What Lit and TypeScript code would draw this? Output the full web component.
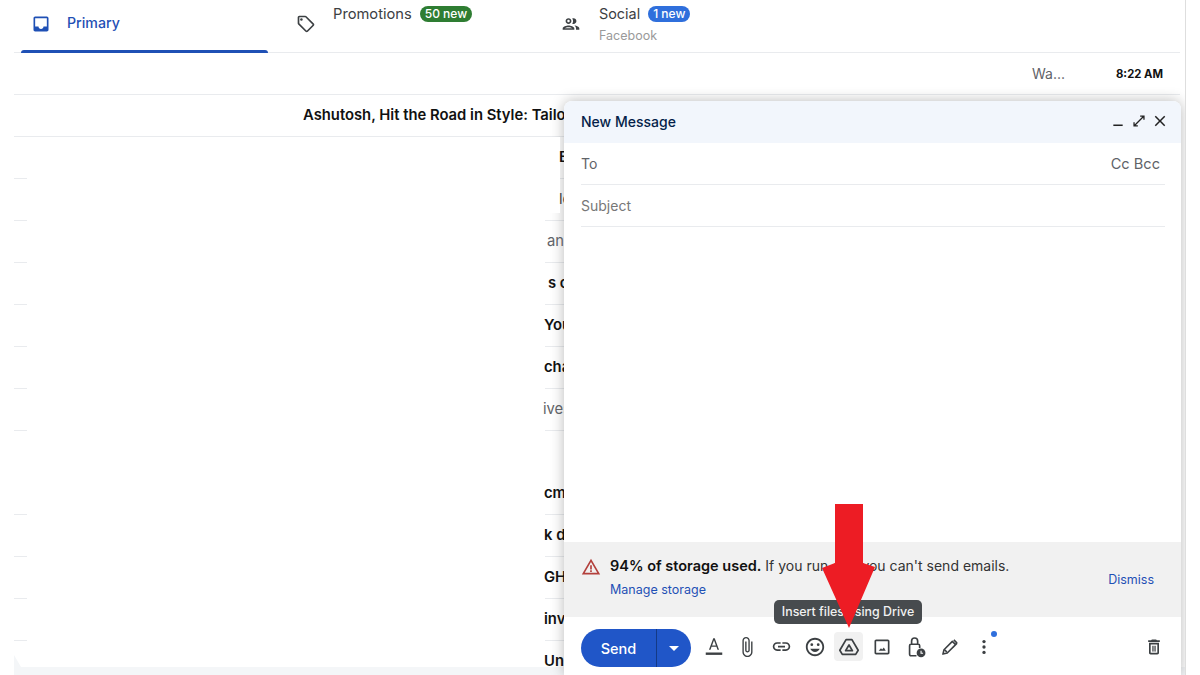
import { LitElement, css, html, svg } from 'lit';
import { customElement } from 'lit/decorators.js';

const icons: Record<string, unknown> = {
	inbox: svg`<path d="M19 3H4.99c-1.11 0-1.98.89-1.98 2L3 19c0 1.1.88 2 1.99 2H19c1.1 0 2-.9 2-2V5c0-1.11-.9-2-2-2zm0 12h-4c0 1.66-1.35 3-3 3s-3-1.34-3-3H4.99V5H19v10z"/>`,
	tag: svg`<path d="M21.41 11.41l-8.83-8.83C12.21 2.21 11.7 2 11.17 2H4C2.9 2 2 2.9 2 4v7.17c0 .53.21 1.04.59 1.41l8.83 8.83c.78.78 2.05.78 2.83 0l7.17-7.17c.78-.78.78-2.04-.01-2.83zM12.83 20L4 11.17V4h7.17L20 12.83 12.83 20z"/><circle cx="6.5" cy="6.5" r="1.5"/>`,
	people: svg`<path d="M9 13.75c-2.34 0-7 1.17-7 3.5V19h14v-1.75c0-2.33-4.66-3.5-7-3.5zM4.34 17c.84-.58 2.87-1.25 4.66-1.25s3.82.67 4.66 1.25H4.34zM9 12c1.93 0 3.5-1.57 3.5-3.5S10.93 5 9 5 5.5 6.57 5.5 8.5 7.07 12 9 12zm0-5c.83 0 1.5.67 1.5 1.5S9.83 10 9 10s-1.5-.67-1.5-1.5S8.17 7 9 7zm7.04 6.81c1.16.84 1.96 1.96 1.96 3.44V19h4v-1.75c0-2.02-3.5-3.17-5.96-3.44zM15 12c1.93 0 3.5-1.57 3.5-3.5S16.93 5 15 5c-.54 0-1.04.13-1.5.35.63.89 1 1.98 1 3.15s-.37 2.26-1 3.15c.46.22.96.35 1.5.35z"/>`,
	minimize: svg`<rect x="4" y="18" width="16" height="2.6"/>`,
	expand: svg`<path d="M14 3.5h6.5V10M20.5 3.5l-17 17M3.5 14v6.5H10" fill="none" stroke="currentColor" stroke-width="2.2"/>`,
	close: svg`<path d="M19 6.41L17.59 5 12 10.59 6.41 5 5 6.41 10.59 12 5 17.59 6.41 19 12 13.41 17.59 19 19 17.59 13.41 12z"/>`,
	warning: svg`<path d="M1 21h22L12 2 1 21zm3.47-2L12 5.99 19.53 19H4.47zM11 16h2v2h-2zm0-6h2v5h-2z"/>`,
	format: svg`<path d="M11.200 2.500 6.500 15h1.700l1.150-3.200h5.300l1.150 3.200h1.700L12.800 2.500h-1.600zm-1.300 7.800L12 4.600l2.100 5.700H9.900z"/><rect x="3" y="18" width="18" height="2.600"/>`,
	attach: svg`<path d="M16.5 6v11.5c0 2.21-1.79 4-4 4s-4-1.79-4-4V5c0-1.38 1.12-2.5 2.5-2.5s2.5 1.12 2.5 2.5v10.5c0 .55-.45 1-1 1s-1-.45-1-1V6H10v9.5c0 1.38 1.12 2.5 2.5 2.5s2.5-1.12 2.5-2.5V5c0-2.21-1.79-4-4-4S7 2.79 7 5v12.5c0 3.04 2.46 5.5 5.5 5.500s5.500-2.460 5.500-5.500V6h-1.500z"/>`,
	link: svg`<path d="M3.9 12c0-1.71 1.39-3.1 3.1-3.1h4V7H7c-2.76 0-5 2.24-5 5s2.24 5 5 5h4v-1.9H7c-1.71 0-3.1-1.39-3.1-3.1zM8 13h8v-2H8v2zm9-6h-4v1.9h4c1.71 0 3.1 1.39 3.1 3.1s-1.39 3.1-3.1 3.1h-4V17h4c2.76 0 5-2.24 5-5s-2.24-5-5-5z"/>`,
	emoji: svg`<path d="M11.99 2C6.47 2 2 6.48 2 12s4.47 10 9.99 10C17.52 22 22 17.52 22 12S17.52 2 11.99 2zM12 20c-4.420 0-8-3.58-8-8s3.58-8 8-8 8 3.58 8 8-3.58 8-8 8z"/><circle cx="15.5" cy="9.500" r="1.5"/><circle cx="8.5" cy="9.5" r="1.5"/><path d="M12 17.5c2.330 0 4.310-1.460 5.110-3.500H6.890c.8 2.040 2.780 3.500 5.110 3.500z"/>`,
	drive: svg`<path d="M8.800 4h6.400l6.800 11.500-2.700 4.500H4.700L2 15.500zM12 9.800 8.300 16h7.400z" fill="none" stroke="currentColor" stroke-width="1.900" stroke-linejoin="round"/>`,
	image: svg`<path d="M19 5v14H5V5h14m0-2H5c-1.100 0-2 .9-2 2v14c0 1.100.9 2 2 2h14c1.100 0 2-.9 2-2V5c0-1.100-.9-2-2-2z"/><path d="M14.200 12.500l-2 2.400-1.400-1.500L8 16.500h8.500z"/>`,
	lock: svg`<path d="M12.500 21.500H6.500a1.500 1.500 0 0 1-1.500-1.500V10.500A1.500 1.500 0 0 1 6.500 9h8A1.500 1.500 0 0 1 16 10.500V13M7.200 9V5.500a3.300 3.300 0 0 1 6.600 0V9" fill="none" stroke="currentColor" stroke-width="1.800"/><circle cx="17.500" cy="18.500" r="4.800"/><path d="M17.500 16v2.800h2.200" fill="none" stroke="#fff" stroke-width="1.200"/>`,
	pen: svg`<path d="M3.500 20.500l1.300-5.200L14.800 5.300l3.900 3.900-10 10zM6 15.800l2.200 2.200M16.600 3.500l3.900 3.900M20.500 7.400 15.500 12.500" fill="none" stroke="currentColor" stroke-width="1.900" stroke-linejoin="round"/>`,
	more: svg`<circle cx="12" cy="5.500" r="2"/><circle cx="12" cy="12" r="2"/><circle cx="12" cy="18.500" r="2"/>`,
	trash: svg`<path d="M6 19c0 1.100.9 2 2 2h8c1.100 0 2-.9 2-2V7H6v12zM8 9h8v10H8V9zm7.500-5l-1-1h-5l-1 1H5v2h14V4z"/><rect x="10" y="10.500" width="1.500" height="7"/><rect x="12.500" y="10.500" width="1.500" height="7"/>`,
};

const icon = (name: string, size: number) => html`<svg
	width=${size}
	height=${size}
	viewBox="0 0 24 24"
	fill="currentColor"
>${icons[name]}</svg>`;

// visible ends of the subjects, the rest sits behind the patch and the compose window
const rows = [
	{ left: 545, text: 'B', bold: true },
	{ left: 545, text: 'le', bold: false, dark: true },
	{ left: 533, text: 'and', bold: false },
	{ left: 534, text: 's c', bold: true },
	{ left: 530, text: 'You', bold: true },
	{ left: 530, text: 'cha', bold: true },
	{ left: 529, text: 'ives', bold: false },
	{ left: 530, text: '', bold: false, noLine: true },
	{ left: 530, text: 'cm', bold: true },
	{ left: 530, text: 'k de', bold: true },
	{ left: 530, text: 'GH', bold: true },
	{ left: 530, text: 'inv', bold: true },
	{ left: 530, text: 'Un', bold: true },
];

const tools: [string, number][] = [
	['format', 22],
	['attach', 22],
	['link', 21],
	['emoji', 22],
	['drive', 22],
	['image', 20],
	['lock', 22],
	['pen', 20],
	['more', 20],
];

@customElement('app-root')
export class AppRoot extends LitElement {
	static override styles = css`
		:host {
			display: block;
			width: 1200px;
			height: 675px;
			overflow: hidden;
			background: #fff;
			font-family: Inter, 'Liberation Sans', sans-serif;
			color: #1f1f1f;
		}

		main {
			position: relative;
			display: flex;
			flex-direction: column;
			width: 1185px;
			height: 675px;
			border-right: 1px solid #dedede;
			overflow: hidden;
		}

		.tabs {
			display: flex;
			flex: none;
			height: 53px;
			margin: 0 5px 0 14px;
			box-sizing: border-box;
			border-bottom: 1px solid #e9ebee;
		}

		.tab {
			position: relative;
			display: flex;
			box-sizing: border-box;
			height: 52px;
			color: #3c4043;
		}

		.tab svg {
			flex: none;
			margin-top: 14px;
		}

		.tab.primary {
			width: 247px;
			margin-left: 7px;
			padding-left: 10px;
			color: #1f50b5;
			font-size: 14.2px;
			font-weight: 500;
		}

		.tab.primary::after {
			content: '';
			position: absolute;
			left: 0;
			right: 0;
			bottom: -1px;
			height: 3px;
			border-radius: 3px 3px 0 0;
			background: #1f50b5;
		}

		.tab.primary .label {
			margin: 14px 0 0 16px;
		}

		.tab.promo {
			width: 293px;
			padding-left: 28px;
		}

		.tab.social {
			padding-left: 0;
		}

		.tab-text {
			margin-left: 18px;
			font-size: 14.4px;
		}

		.promo .tab-text {
			margin-left: 17px;
			font-size: 14.7px;
		}

		.tab-title {
			display: flex;
			align-items: center;
			height: 16px;
			margin-top: 6px;
			gap: 8px;
		}

		.tab-title span.t {
			margin-top: -1px;
		}

		.badge {
			height: 16px;
			padding: 0 5px;
			border-radius: 8px;
			color: #fff;
			font-size: 12px;
			font-weight: 500;
			line-height: 16px;
		}

		.badge.green {
			background: #2e7d32;
		}

		.badge.blue {
			background: #2f6fdc;
		}

		.tab-sub {
			margin-top: 6px;
			color: #9a9a9a;
			font-size: 12.5px;
		}

		.list {
			flex: 1;
			min-height: 0;
			margin-left: 14px;
			overflow: hidden;
		}

		.row {
			display: flex;
			align-items: center;
			box-sizing: border-box;
			width: 550px;
			height: 42px;
			padding-bottom: 2px;
			border-bottom: 1px solid #e9ebee;
			font-size: 14.8px;
			white-space: nowrap;
			overflow: hidden;
		}

		.row.full {
			width: 1166px;
			padding-bottom: 0;
			color: #1f1f1f;
		}

		.row.no-line {
			border-bottom-color: transparent;
		}

		.frag {
			position: relative;
			z-index: 2;
			color: #5f6368;
		}

		.frag.bold {
			color: #111;
			font-weight: 600;
		}

		.frag.dark {
			color: #444;
		}

		.from {
			margin-left: auto;
			color: #5f6368;
			font-size: 14px;
		}

		.time {
			margin: 0 17px 0 51px;
			color: #111;
			font-size: 11.3px;
			font-weight: 700;
		}

		.band {
			position: relative;
			flex: none;
			height: 8px;
			margin-left: 14px;
			background: #f4f6f8;
		}

		.band::before {
			content: '';
			position: absolute;
			left: 0;
			bottom: 100%;
			width: 7px;
			height: 12px;
			background: #f4f6f8;
			clip-path: polygon(0 0, 100% 100%, 0 100%);
			z-index: 2;
		}

		/* redacted part of the list, drawn in the screenshot itself */
		.patch {
			position: absolute;
			left: 27px;
			top: 137px;
			width: 533px;
			height: 530px;
			z-index: 1;
			background: #fff;
			clip-path: polygon(0 0, 100% 0, 100% 76px, 518px 76px, 518px 100%, 0 100%);
		}

		.compose {
			position: absolute;
			left: 564px;
			top: 101px;
			display: flex;
			flex-direction: column;
			width: 617px;
			height: 574px;
			border-radius: 8px 8px 0 0;
			background: #fff;
			box-shadow: 0 0 14px rgba(0, 0, 0, 0.28);
		}

		.head {
			display: flex;
			align-items: center;
			flex: none;
			height: 42px;
			padding: 0 12px 2px 17px;
			box-sizing: border-box;
			border-radius: 8px 8px 0 0;
			background: #f2f6fc;
			color: #041e49;
			font-size: 14px;
			font-weight: 500;
		}

		.head-icons {
			display: flex;
			align-items: center;
			gap: 5px;
			margin-left: auto;
			color: #222;
		}

		.head-icons svg:first-child {
			margin-right: 2px;
		}

		.field {
			display: flex;
			align-items: center;
			flex: none;
			box-sizing: border-box;
			height: 42px;
			margin: 0 16px 0 17px;
			border-bottom: 1px solid #e9ebee;
			color: #5f6368;
			font-size: 14px;
		}

		.field .cc {
			margin: 0 5px 0 auto;
			font-size: 14.6px;
		}

		.field.subject {
			color: #777;
		}

		.body {
			flex: 1;
		}

		.notice {
			display: flex;
			flex: none;
			box-sizing: border-box;
			height: 75px;
			padding: 15px 27px 0 17px;
			background: #f1f1f1;
		}

		.notice svg {
			flex: none;
			margin-top: 0;
			color: #b3403c;
		}

		.notice-text {
			margin-left: 9px;
			color: #333;
			font-size: 14px;
		}

		.notice-text b {
			color: #111;
			font-size: 14.5px;
			font-weight: 600;
		}

		.blue-link {
			color: #1f50b5;
			font-size: 12.5px;
		}

		.notice-text .blue-link {
			margin-top: 8px;
		}

		.notice > .blue-link {
			margin: 15px 0 0 auto;
		}

		.toolbar {
			position: relative;
			display: flex;
			align-items: center;
			flex: none;
			box-sizing: border-box;
			height: 58px;
			padding: 4px 13px 0 17px;
		}

		.send {
			display: flex;
			flex: none;
			width: 110px;
			height: 38px;
			border-radius: 19px;
			background: #2056c8;
			color: #fff;
		}

		.send-label {
			display: flex;
			align-items: center;
			justify-content: center;
			width: 75px;
			border-right: 1px solid #143a86;
			font-size: 14.5px;
			font-weight: 500;
		}

		.send-caret {
			flex: 1;
			display: flex;
			align-items: center;
			justify-content: center;
		}

		.send-caret i {
			border: 5px solid transparent;
			border-top-color: #fff;
			border-bottom: 0;
		}

		.tools {
			display: flex;
			gap: 4.75px;
			margin: 0 0 3px 8px;
		}

		.tool {
			position: relative;
			display: flex;
			align-items: center;
			justify-content: center;
			width: 29px;
			height: 29px;
			border-radius: 4px;
			color: #3c4043;
		}

		.tool.active {
			background: #f1f1f1;
		}

		.dot {
			position: absolute;
			top: -1px;
			right: 1px;
			width: 6px;
			height: 6px;
			border-radius: 50%;
			background: #2f6fdc;
		}

		.trash {
			margin: 0 0 3px auto;
		}

		.tooltip {
			position: absolute;
			left: 210px;
			top: -17px;
			box-sizing: border-box;
			width: 148px;
			height: 24px;
			border-radius: 5px;
			background: #474b4e;
			color: #f1f1f1;
			font-size: 12.4px;
			font-weight: 500;
			line-height: 24px;
			text-align: center;
			white-space: nowrap;
		}

		.arrow {
			position: absolute;
			left: 815px;
			top: 500px;
			z-index: 3;
		}
	`;

	protected override render() {
		return html`
			<main>
				<div class="tabs">
					<div class="tab primary">
						${icon('inbox', 20)}
						<span class="label">Primary</span>
					</div>
					<div class="tab promo">
						${icon('tag', 20)}
						<div class="tab-text">
							<div class="tab-title"><span class="t">Promotions</span> <span class="badge green">50 new</span></div>
						</div>
					</div>
					<div class="tab social">
						${icon('people', 20)}
						<div class="tab-text">
							<div class="tab-title"><span class="t">Social</span> <span class="badge blue">1 new</span></div>
							<div class="tab-sub">Facebook</div>
						</div>
					</div>
				</div>

				<div class="list">
					<div class="row full">
						<span class="from">Wa...</span>
						<span class="time">8:22 AM</span>
					</div>
					<div class="row" style="padding-left: 289px">
						<span class="frag bold">Ashutosh, Hit the Road in Style: Tailored</span>
					</div>
					${rows.map(
						(r) => html`<div class="row ${r.noLine ? 'no-line' : ''}" style="padding-left: ${r.left}px">
							<span class="frag ${r.bold ? 'bold' : ''} ${r.dark ? 'dark' : ''}">${r.text}</span>
						</div>`,
					)}
				</div>
				<div class="band"></div>

				<section class="compose">
					<div class="head">
						New Message
						<div class="head-icons">
							${icon('minimize', 14)} ${icon('expand', 14)} ${icon('close', 18)}
						</div>
					</div>
					<div class="field">To <span class="cc">Cc Bcc</span></div>
					<div class="field subject">Subject</div>
					<div class="body"></div>
					<div class="notice">
						${icon('warning', 20)}
						<div class="notice-text">
							<div><b>94% of storage used.</b> If you run out, you can't send emails.</div>
							<div class="blue-link">Manage storage</div>
						</div>
						<div class="blue-link">Dismiss</div>
					</div>
					<div class="toolbar">
						<div class="send">
							<div class="send-label">Send</div>
							<div class="send-caret"><i></i></div>
						</div>
						<div class="tools">
							${tools.map(
								([t, size]) => html`<div class="tool ${t === 'drive' ? 'active' : ''}">
									${icon(t, size)}
									${t === 'more' ? html`<span class="dot"></span>` : null}
								</div>`,
							)}
						</div>
						<div class="tool trash">${icon('trash', 20)}</div>
						<div class="tooltip">Insert files using Drive</div>
					</div>
				</section>

				<div class="patch"></div>

				<svg class="arrow" width="70" height="132" viewBox="815 500 70 132">
					<path d="M835 504h28v59l12 4-26 61-27-60 13-5z" fill="#ed1c24" />
				</svg>
			</main>
		`;
	}
}
